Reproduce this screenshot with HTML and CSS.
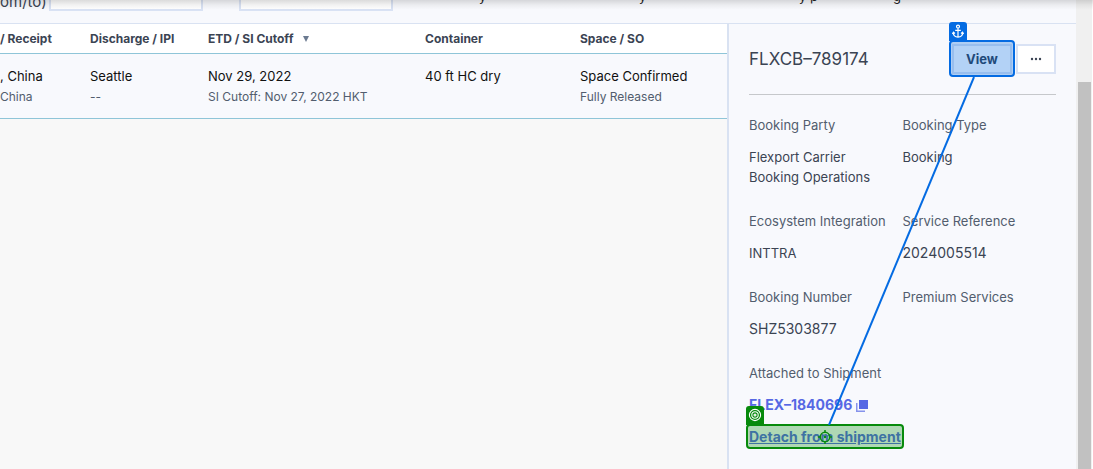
FILE: index.html
```html
<!DOCTYPE html>
<html lang="en">
<head>
<meta charset="utf-8">
<title>Bookings</title>
<link rel="stylesheet" href="styles.css">
</head>
<body>
<div class="app">
  <main class="content">
    <header class="filters">
      <label class="filter-label" for="date-from">om/to)</label>
      <input class="filter-input" id="date-from" type="text">
      <input class="filter-input second" type="text" aria-label="Date to">
      <div class="filter-notes">
        <span>y</span><span>y</span><span>y p</span><span>g</span>
      </div>
    </header>
    <div class="workspace">
      <section class="list">
        <table class="bookings">
          <colgroup><col class="c-receipt"><col class="c-discharge"><col class="c-etd"><col class="c-container"><col></colgroup>
          <thead>
            <tr>
              <th>/ Receipt</th>
              <th>Discharge / IPI</th>
              <th>ETD / SI Cutoff <svg class="sort" viewBox="0 0 8 8" aria-hidden="true"><path d="M1 1h6L4 7z"/></svg></th>
              <th>Container</th>
              <th>Space / SO</th>
            </tr>
          </thead>
          <tbody>
            <tr>
              <td>, China<small>China</small></td>
              <td>Seattle<small>--</small></td>
              <td>Nov 29, 2022<small>SI Cutoff: Nov 27, 2022 HKT</small></td>
              <td>40 ft HC dry</td>
              <td>Space Confirmed<small>Fully Released</small></td>
            </tr>
          </tbody>
        </table>
      </section>
      <aside class="panel">
        <div class="panel-head">
          <h1 class="title">FLXCB–789174</h1>
          <div class="view-wrap">
            <button class="button view" type="button">View</button>
            <div class="mark anchor-mark">
              <svg class="tag anchor-tag" viewBox="0 0 18 19" aria-hidden="true"><g fill="none" stroke="#fff" stroke-width="1.2"><circle cx="9" cy="4.6" r="1.5"/><path d="M9 6.2V15M6.2 8.3h5.6M4.2 10.5c.2 3 2 4.6 4.8 4.6s4.6-1.6 4.8-4.6M3.4 12l1-1.8 1.6 1.3M14.6 12l-1-1.8-1.6 1.3"/></g></svg>
            </div>
          </div>
          <button class="button more" type="button" aria-label="More actions"><svg viewBox="0 0 12 4" aria-hidden="true"><circle cx="2" cy="2" r="1.2"/><circle cx="6" cy="2" r="1.2"/><circle cx="10" cy="2" r="1.2"/></svg></button>
        </div>
        <dl class="details">
          <div><dt>Booking Party</dt><dd>Flexport Carrier Booking Operations</dd></div>
          <div><dt>Booking Type</dt><dd>Booking</dd></div>
          <div><dt>Ecosystem Integration</dt><dd>INTTRA</dd></div>
          <div><dt>Service Reference</dt><dd class="code">2024005514</dd></div>
          <div><dt>Booking Number</dt><dd class="code">SHZ5303877</dd></div>
          <div><dt>Premium Services</dt></div>
          <div class="wide"><dt>Attached to Shipment</dt><dd><a class="shipment" href="#shipment">FLEX–1840696</a> <svg class="copy" viewBox="0 0 12 12" aria-hidden="true"><path d="M3 0h9v9H3z"/><path class="back" d="M0 3h1.5v7.5H9V12H0z"/></svg></dd></div>
        </dl>
        <div class="detach-wrap">
          <a class="detach" href="#detach">Detach from shipment</a>
          <div class="mark target-mark">
            <svg class="tag target-tag" viewBox="0 0 18 19" aria-hidden="true"><g fill="none" stroke="#fff" stroke-width="1.1"><circle cx="9" cy="9" r="5.6"/><circle cx="9" cy="9" r="3.2"/><circle cx="9" cy="9" r="1"/></g></svg>
            <svg class="crosshair" viewBox="0 0 14 14" aria-hidden="true"><g fill="none" stroke="#078a0c" stroke-width="1.5"><circle cx="7" cy="7" r="4.7"/><path d="M7 0v3M7 11v3M0 7h3M11 7h3"/></g><circle cx="7" cy="7" r="1.2" fill="#078a0c"/></svg>
          </div>
        </div>
        <svg class="connector" viewBox="0 0 147 348" aria-hidden="true"><path d="M146 0L1 348"/></svg>
      </aside>
    </div>
  </main>
  <div class="scrollbar" aria-hidden="true"><div class="thumb"></div></div>
</div>
</body>
</html>
```
FILE: styles.css
```css
* { box-sizing: border-box; }
body { margin: 0; font-family: Inter, "Liberation Sans", sans-serif; font-size: 13px; line-height: 20px; color: #3b4453; background: #fff; }
.app { position: relative; display: flex; height: 100vh; overflow: hidden; padding-right: 1px; }
.app::before { content: ""; position: absolute; inset: 0 0 auto; height: 10px; z-index: 2; background: linear-gradient(rgba(0,0,0,.14), rgba(0,0,0,.05) 50%, transparent); }
.content { flex: 1; min-width: 0; display: flex; flex-direction: column; }
.filters { display: flex; align-items: flex-end; height: 24px; padding-bottom: 12px; background: #f8f9fd; border-bottom: 1px solid #d9e2f2; }
.filter-label { width: 49px; font-size: 15px; line-height: 18px; white-space: nowrap; }
.filter-input { width: 154px; height: 36px; border: 2px solid #d9e2f4; background: #fff; }
.second { margin-left: 36px; }
.filter-notes { display: flex; color: #222; margin-left: 86px; padding-bottom: 5px; }
.filter-notes span { width: 160px; }
.filter-notes span:nth-child(3) { width: 94px; }
.workspace { flex: 1; display: flex; min-height: 0; }
.list { flex: 1; min-width: 0; background: #f8f8f8; }
.bookings { width: 100%; border-collapse: separate; border-spacing: 0; table-layout: fixed; color: #111; }
.c-receipt { width: 90px; }
.c-discharge { width: 118px; }
.c-etd { width: 217px; }
.c-container { width: 155px; }
th, td { border-bottom: 1px solid #8fc5d8; white-space: nowrap; }
th { height: 30px; padding: 0; text-align: left; font-size: 12px; color: #3b4453; background: #fff; }
td { height: 65px; padding: 12px 0 0; vertical-align: top; background: #f8f9fd; }
small { display: block; font-size: 12px; line-height: 22px; color: #525d6e; }
.sort { width: 8px; height: 8px; margin-left: 6px; fill: #6b7a90; }
.panel { position: relative; width: 349px; padding: 20px 20px 0; border-left: 2px solid #d9e2f2; background: #f8f9fd; }
.panel-head { display: flex; align-items: center; height: 51px; padding-bottom: 20px; border-bottom: 1px solid #c6c8cb; }
.title { flex: 1; margin: 0; font-size: 17px; font-weight: 400; }
.button { display: block; height: 30px; border: 2px solid #d9e2f4; background: #fff; font: inherit; color: #3b4453; padding: 0; }
.view-wrap { position: relative; margin-right: 4px; }
.view { width: 60px; font-size: 13px; font-weight: 700; color: #2f3c4e; }
.more { width: 40px; }
.more svg { display: block; width: 12px; height: 4px; margin: 0 auto; fill: #3b4453; }
.mark { position: absolute; border-radius: 4px; pointer-events: none; }
.anchor-mark { inset: -4px -3px -3px; border: 2px solid #046be2; background: rgba(4,107,226,.3); }
.tag { position: absolute; left: -2px; top: -20px; width: 18px; height: 19px; border-radius: 3px 3px 0 0; }
.anchor-tag { background: #046be2; }
.details { display: grid; grid-template-columns: 1fr 1fr; row-gap: 24px; margin: 0; padding-top: 20px; }
dt { color: #525d6e; margin-bottom: 12px; white-space: nowrap; }
dd { margin: 0; padding-right: 20px; }
.code { font-size: 14px; }
.wide { grid-column: 1 / -1; }
.wide dd { height: 20px; }
a { color: #5668e4; font-size: 14px; font-weight: 700; text-decoration: none; }
.copy { width: 12px; height: 12px; vertical-align: -2px; fill: #5668e4; }
.back { opacity: .7; }
.detach-wrap { position: relative; width: max-content; margin-top: 12px; }
.detach { display: block; text-decoration: underline; }
.target-mark { inset: -3px -3px -2px; border: 2px solid #078a0c; background: rgba(7,138,12,.3); }
.target-tag { background: #078a0c; }
.crosshair { position: absolute; left: 50%; top: 50%; width: 14px; height: 14px; transform: translate(-50%, -50%); }
.connector { position: absolute; right: 101px; top: 53px; width: 147px; height: 348px; fill: none; stroke: #046be2; stroke-width: 2; pointer-events: none; }
.scrollbar { width: 16px; padding: 82px 1px 0 2px; background: #f0f0f0; }
.thumb { height: 100%; background: #c1c1c1; }
```
